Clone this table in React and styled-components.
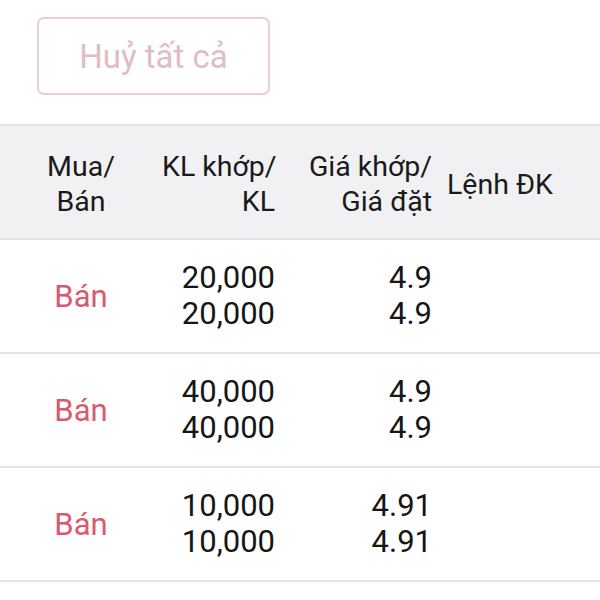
import React from 'react';
import styled, { createGlobalStyle } from 'styled-components';

const GlobalStyle = createGlobalStyle`
  html, body {
    margin: 0;
    padding: 0;
    background: #ffffff;
  }
  body {
    font-family: Roboto, "Noto Sans", "Liberation Sans", sans-serif;
    color: #1c1c1c;
  }
`;

const orders = [
  { side: 'Bán', matched: '20,000', qty: '20,000', matchPrice: '4.9', price: '4.9' },
  { side: 'Bán', matched: '40,000', qty: '40,000', matchPrice: '4.9', price: '4.9' },
  { side: 'Bán', matched: '10,000', qty: '10,000', matchPrice: '4.91', price: '4.91' },
];

const App = () => {
  return (
    <Page>
      <GlobalStyle />
      <Toolbar>
        <CancelAllButton disabled>Huỷ tất cả</CancelAllButton>
      </Toolbar>
      <Table>
        <HeaderRow>
          <Cell $align="center">Mua/<br />Bán</Cell>
          <Cell $align="right">KL khớp/<br />KL</Cell>
          <Cell $align="right">Giá khớp/<br />Giá đặt</Cell>
          <Cell $align="left">Lệnh ĐK</Cell>
        </HeaderRow>
        {orders.map((o, i) => (
          <OrderRow key={i}>
            <SideCell>{o.side}</SideCell>
            <NumCell>
              <span>{o.matched}</span>
              <span>{o.qty}</span>
            </NumCell>
            <NumCell>
              <span>{o.matchPrice}</span>
              <span>{o.price}</span>
            </NumCell>
            <Cell $align="left" />
          </OrderRow>
        ))}
      </Table>
    </Page>
  );
};

export default App;

const Page = styled.div`
  width: 600px;
  height: 600px;
  overflow: hidden;
  background: #fff;
`;

const Toolbar = styled.div`
  display: flex;
  padding: 17px 0 29px 37px;
`;

const CancelAllButton = styled.button`
  width: 233px;
  height: 78px;
  border: 2px solid #ebcdd3;
  border-radius: 7px;
  background: #fff;
  color: #e2bcc5;
  font-family: Roboto, sans-serif;
  font-size: 33px;
  padding: 0;
  cursor: default;
`;

const Table = styled.div`
  display: flex;
  flex-direction: column;
`;

const rowGrid = `
  display: grid;
  grid-template-columns: 162px 118px 157px 1fr;
  align-items: center;
`;

const HeaderRow = styled.div`
  ${rowGrid}
  height: 112px;
  padding-top: 4px;
  box-sizing: content-box;
  height: 108px;
  background: #f1f1f3;
  border-top: 2px solid #e2e2e4;
  border-bottom: 2px solid #e2e2e4;
  font-size: 28.5px;
  line-height: 35px;
  color: #1a1a1a;
`;

const OrderRow = styled.div`
  ${rowGrid}
  height: 112px;
  border-bottom: 2px solid #e4e4e6;
  font-size: 31px;
`;

const Cell = styled.div`
  text-align: ${p => p.$align};
  white-space: nowrap;
  padding: ${p => (p.$align === 'right' ? '0 5px 0 0' : p.$align === 'left' ? '0 0 0 10px' : '0')};
`;

const SideCell = styled.div`
  text-align: center;
  color: #d85a6f;
`;

const NumCell = styled.div`
  display: flex;
  flex-direction: column;
  align-items: flex-end;
  padding-right: 5px;
  line-height: 36px;
  color: #161616;
`;
